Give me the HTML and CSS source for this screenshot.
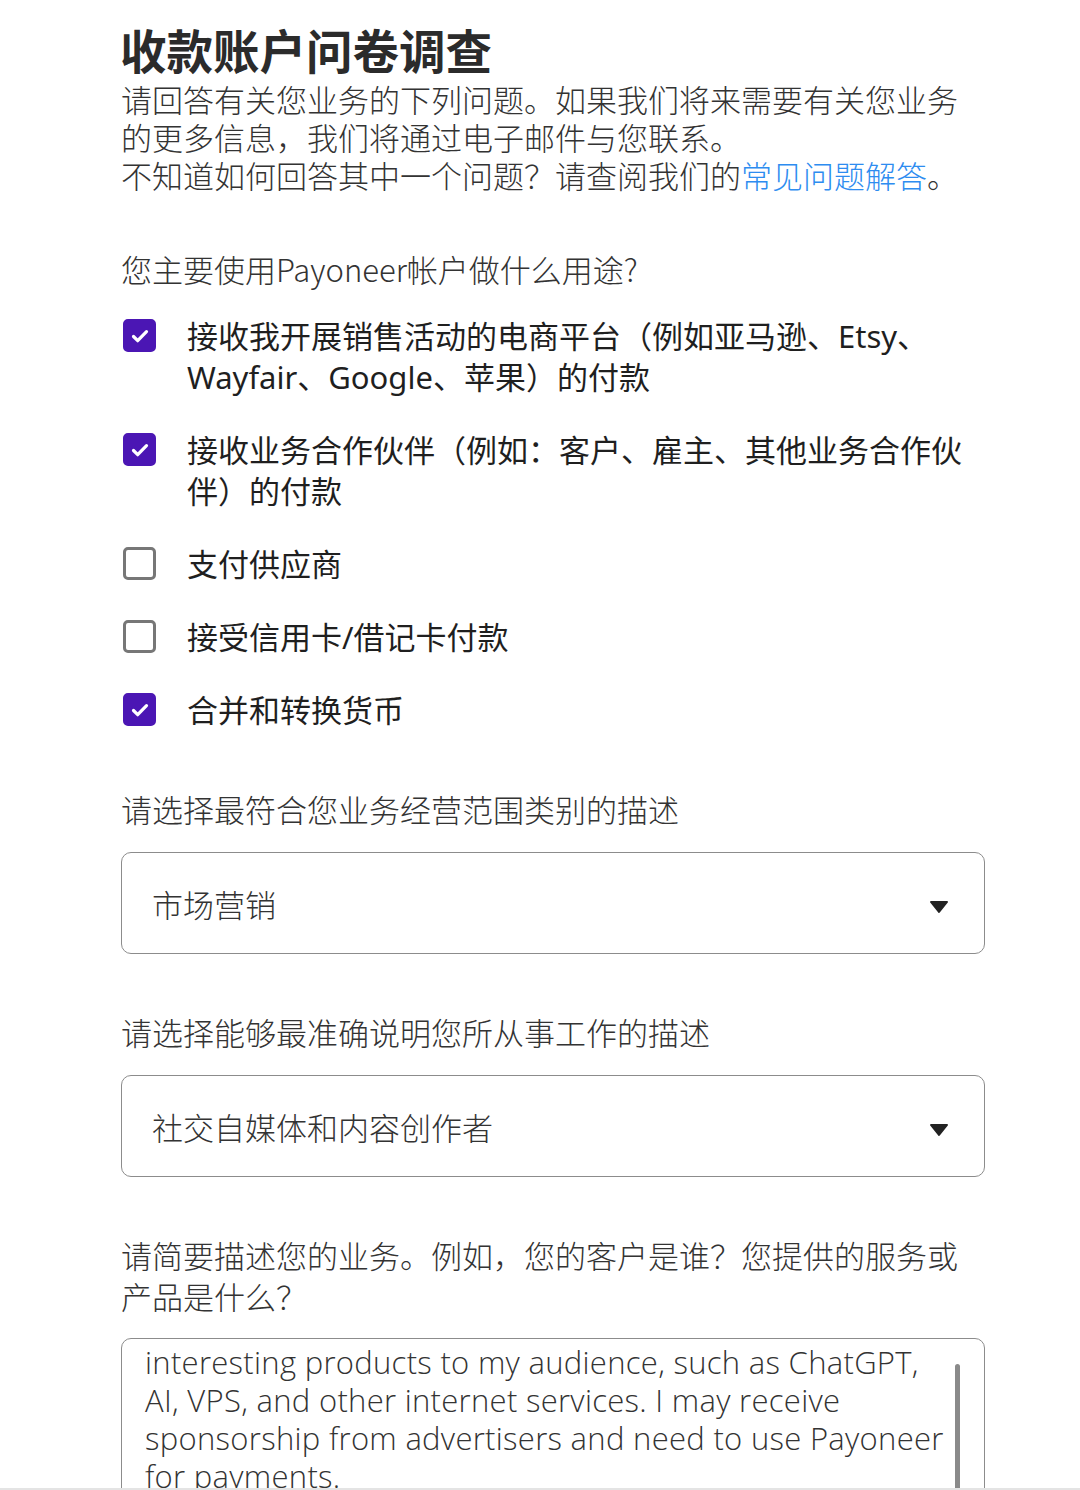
FILE: index.html
```html
<!DOCTYPE html>
<html lang="zh-CN">
<head>
<meta charset="utf-8">
<title>收款账户问卷调查</title>
<link rel="stylesheet" href="styles.css">
</head>
<body>
<main class="page">
  <h1 class="title">收款账户问卷调查</h1>
  <p class="intro">请回答有关您业务的下列问题。如果我们将来需要有关您业务的更多信息，我们将通过电子邮件与您联系。<br>不知道如何回答其中一个问题？请查阅我们的<a class="link" href="#">常见问题解答</a>。</p>

  <section class="question">
    <div class="label">您主要使用Payoneer帐户做什么用途?</div>
    <ul class="options">
      <li class="option"><span class="box checked"><svg viewBox="0 0 24 24" width="24" height="24"><path d="M5.5 12.5l4.2 4.2 8.8-9" fill="none" stroke="#fff" stroke-width="3.2" stroke-linecap="round" stroke-linejoin="round"/></svg></span><span class="opt-text">接收我开展销售活动的电商平台（例如亚马逊、Etsy、Wayfair、Google、苹果）的付款</span></li>
      <li class="option"><span class="box checked"><svg viewBox="0 0 24 24" width="24" height="24"><path d="M5.5 12.5l4.2 4.2 8.8-9" fill="none" stroke="#fff" stroke-width="3.2" stroke-linecap="round" stroke-linejoin="round"/></svg></span><span class="opt-text">接收业务合作伙伴（例如：客户、雇主、其他业务合作伙伴）的付款</span></li>
      <li class="option"><span class="box"></span><span class="opt-text">支付供应商</span></li>
      <li class="option"><span class="box"></span><span class="opt-text">接受信用卡/借记卡付款</span></li>
      <li class="option"><span class="box checked"><svg viewBox="0 0 24 24" width="24" height="24"><path d="M5.5 12.5l4.2 4.2 8.8-9" fill="none" stroke="#fff" stroke-width="3.2" stroke-linecap="round" stroke-linejoin="round"/></svg></span><span class="opt-text">合并和转换货币</span></li>
    </ul>
  </section>

  <section class="question field">
    <div class="label">请选择最符合您业务经营范围类别的描述</div>
    <div class="select"><span class="select-value">市场营销</span><svg class="caret" viewBox="0 0 20 14" width="20" height="14"><path d="M2 2h16l-8 10z" fill="#222" stroke="#222" stroke-width="2" stroke-linejoin="round"/></svg></div>
  </section>

  <section class="question field">
    <div class="label">请选择能够最准确说明您所从事工作的描述</div>
    <div class="select"><span class="select-value">社交自媒体和内容创作者</span><svg class="caret" viewBox="0 0 20 14" width="20" height="14"><path d="M2 2h16l-8 10z" fill="#222" stroke="#222" stroke-width="2" stroke-linejoin="round"/></svg></div>
  </section>

  <section class="question field">
    <div class="label">请简要描述您的业务。例如，您的客户是谁？您提供的服务或产品是什么？</div>
    <div class="textarea">
      <div class="ta-text">interesting products to my audience, such as ChatGPT, AI, VPS, and other internet services. I may receive sponsorship from advertisers and need to use Payoneer for payments.</div>
      <span class="scrollbar"></span>
    </div>
  </section>
</main>
<div class="bottom-edge"></div>
</body>
</html>
```
FILE: styles.css
```css
html, body {
  margin: 0;
  padding: 0;
  background: #fff;
  height: 1490px;
  overflow: hidden;
}
body {
  font-family: "Noto Sans CJK SC", "Noto Sans", sans-serif;
  color: #333;
}
.page {
  width: 864px;
  margin-left: 121px;
  padding-top: 21px;
}
.title {
  margin: 0;
  font-size: 46.5px;
  line-height: 56px;
  font-weight: 700;
  color: #2b2b2b;
  margin-left: -1px;
}
.intro {
  margin: 3px 0 0;
  font-size: 31px;
  line-height: 38px;
  font-weight: 300;
  color: #333;
}
.link {
  color: #2d8cf0;
  text-decoration: none;
}
.question {
  margin-top: 54px;
}
.label {
  font-size: 31px;
  line-height: 41px;
  font-weight: 300;
  color: #333;
}
.options {
  list-style: none;
  margin: 27px 0 0;
  padding: 0;
  display: flex;
  flex-direction: column;
  gap: 32px;
}
.option {
  display: flex;
  align-items: flex-start;
  gap: 31px;
  padding-left: 2px;
}
.box {
  flex: 0 0 auto;
  width: 33px;
  height: 33px;
  box-sizing: border-box;
  margin-top: 3px;
  border: 3px solid #777;
  border-radius: 5px;
  display: flex;
  align-items: center;
  justify-content: center;
}
.box.checked {
  background: #4b16b4;
  border-color: #4b16b4;
}
.opt-text {
  font-family: "Noto Sans", "Noto Sans CJK SC", sans-serif;
  font-size: 31px;
  line-height: 41px;
  font-weight: 400;
  color: #1f1f1f;
}
.field {
  margin-top: 57px;
}
.select {
  margin-top: 23px;
  height: 102px;
  box-sizing: border-box;
  border: 1.5px solid #8c8c8c;
  border-radius: 10px;
  display: flex;
  align-items: center;
  justify-content: space-between;
  padding: 0 35px 0 30px;
}
.select-value {
  font-size: 31px;
  font-weight: 300;
  color: #333;
}
.caret {
  display: block;
  margin-top: 8px;
}
.textarea {
  position: relative;
  margin-top: 22px;
  height: 240px;
  box-sizing: border-box;
  border: 1.5px solid #8c8c8c;
  border-radius: 10px;
  padding: 4px 40px 0 23px;
  overflow: hidden;
}
.ta-text {
  font-family: "Open Sans", "Noto Sans", sans-serif;
  font-size: 31px;
  line-height: 38px;
  font-weight: 300;
  letter-spacing: 0.3px;
  color: #333;
}
.scrollbar {
  position: absolute;
  right: 24px;
  top: 25px;
  width: 5px;
  height: 200px;
  border-radius: 3px;
  background: #8a8a8a;
}
.bottom-edge {
  position: fixed;
  left: 0;
  right: 0;
  bottom: 0;
  height: 2px;
  background: #e4e4e4;
}
```
